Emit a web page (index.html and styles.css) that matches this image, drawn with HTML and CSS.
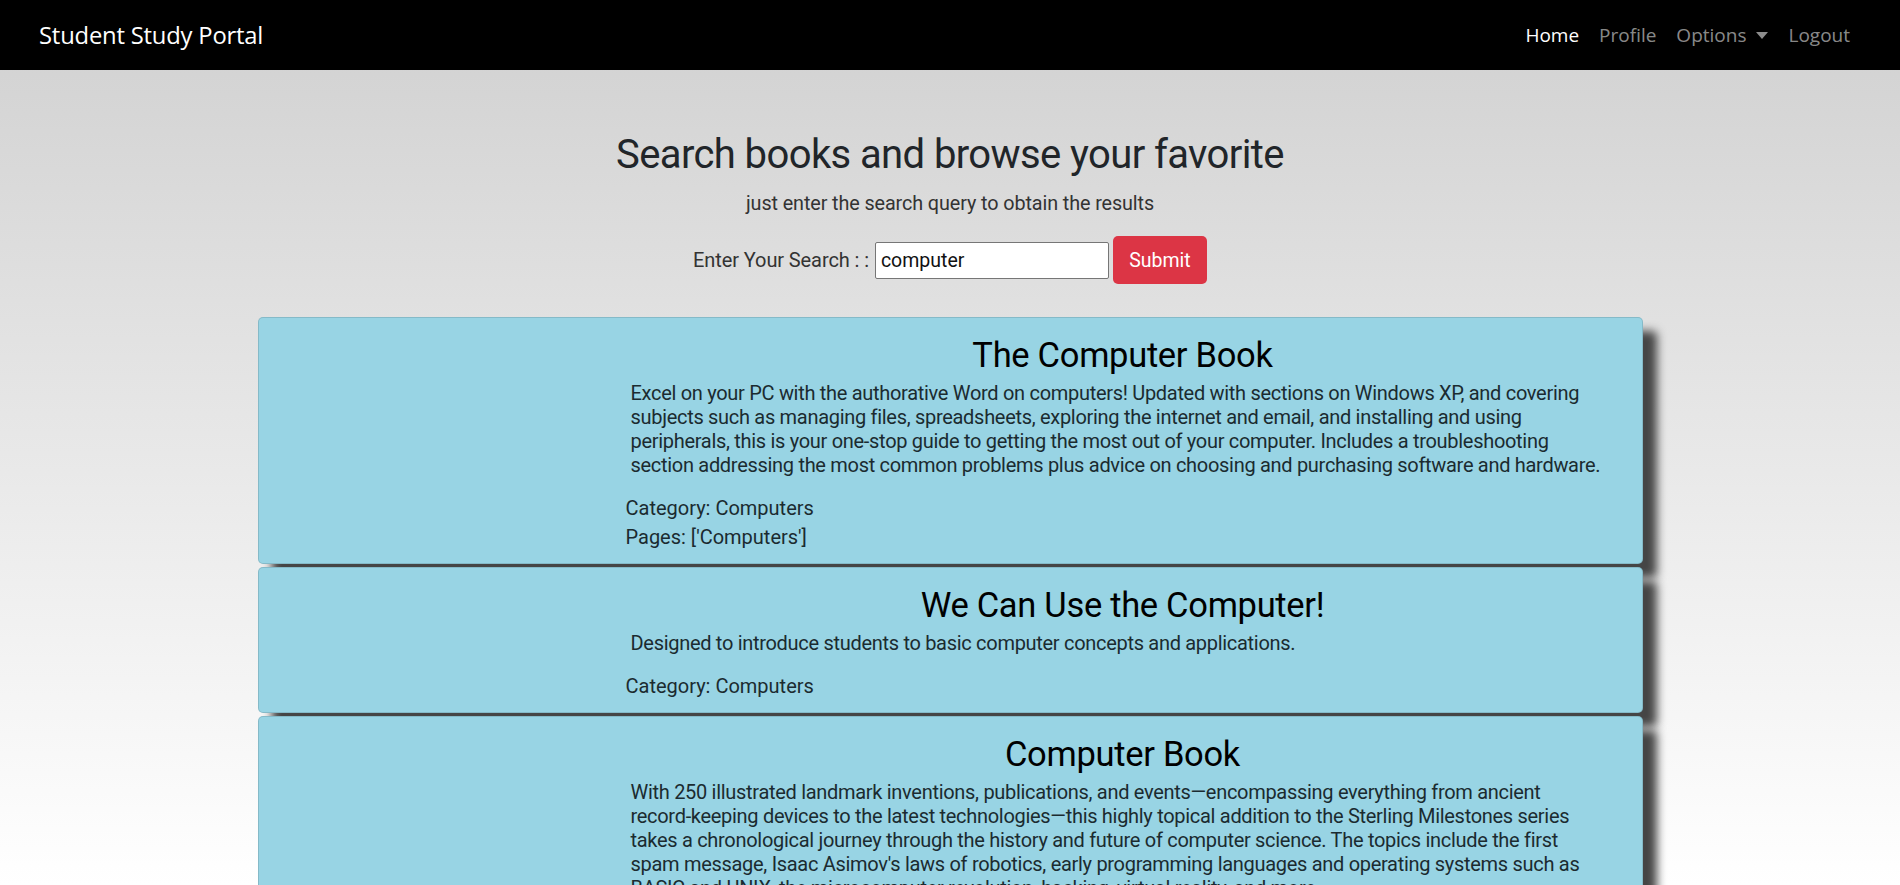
FILE: index.html
```html
<!DOCTYPE html>
<html lang="en">
<head>
<meta charset="utf-8">
<title>Student Study Portal</title>
<link rel="stylesheet" href="styles.css">
</head>
<body>
<nav class="navbar">
  <a class="brand" href="#">Student Study Portal</a>
  <ul class="nav-links">
    <li><a class="nav-link active" href="#">Home</a></li>
    <li><a class="nav-link" href="#">Profile</a></li>
    <li><a class="nav-link dropdown" href="#">Options<span class="caret"></span></a></li>
    <li><a class="nav-link" href="#">Logout</a></li>
  </ul>
</nav>

<main class="page">
  <header class="intro">
    <h1 class="title">Search books and browse your favorite</h1>
    <p class="subtitle">just enter the search query to obtain the results</p>
    <form class="search-form">
      <label class="search-label" for="q">Enter Your Search : :</label>
      <input class="search-input" id="q" type="text" value="computer">
      <button class="btn-submit" type="button">Submit</button>
    </form>
  </header>

  <section class="results">
    <article class="book-card">
      <div class="book-thumb"></div>
      <div class="book-body">
        <h2 class="book-title">The Computer Book</h2>
        <p class="book-desc">Excel on your PC with the authorative Word on computers! Updated with sections on Windows XP, and covering subjects such as managing files, spreadsheets, exploring the internet and email, and installing and using peripherals, this is your one-stop guide to getting the most out of your computer. Includes a troubleshooting section addressing the most common problems plus advice on choosing and purchasing software and hardware.</p>
        <p class="book-meta">Category: Computers</p>
        <p class="book-meta">Pages: ['Computers']</p>
      </div>
    </article>

    <article class="book-card">
      <div class="book-thumb"></div>
      <div class="book-body">
        <h2 class="book-title">We Can Use the Computer!</h2>
        <p class="book-desc">Designed to introduce students to basic computer concepts and applications.</p>
        <p class="book-meta">Category: Computers</p>
      </div>
    </article>

    <article class="book-card">
      <div class="book-thumb"></div>
      <div class="book-body">
        <h2 class="book-title">Computer Book</h2>
        <p class="book-desc">With 250 illustrated landmark inventions, publications, and events—encompassing everything from ancient record-keeping devices to the latest technologies—this highly topical addition to the Sterling Milestones series takes a chronological journey through the history and future of computer science. The topics include the first spam message, Isaac Asimov's laws of robotics, early programming languages and operating systems such as BASIC and UNIX, the microcomputer revolution, hacking, virtual reality, and more.</p>
        <p class="book-meta">Category: Computers</p>
        <p class="book-meta">Pages: ['Computers']</p>
      </div>
    </article>
  </section>
</main>
</body>
</html>
```

FILE: styles.css
```css
* { box-sizing: border-box; }

html, body {
  margin: 0;
  padding: 0;
}

body {
  font-family: Roboto, "Liberation Sans", sans-serif;
  color: #212529;
  background: linear-gradient(to bottom, #d0d0d0 0%, #ffffff 100%) fixed;
  min-height: 100vh;
}

/* ---------- navbar ---------- */
.navbar {
  height: 70px;
  background: #000;
  display: flex;
  align-items: center;
  justify-content: space-between;
  padding: 0 40px 0 39px;
  font-family: "Open Sans", "Noto Sans", sans-serif;
}

.brand {
  color: #fff;
  text-decoration: none;
  font-size: 23.8px;
  letter-spacing: -0.2px;
}

.nav-links {
  list-style: none;
  display: flex;
  margin: 0;
  padding: 0;
}

.nav-link {
  display: flex;
  align-items: center;
  padding: 0 10px;
  font-size: 19px;
  color: rgba(255, 255, 255, 0.55);
  text-decoration: none;
}

.nav-link.active { color: #fff; }

.caret {
  display: inline-block;
  margin-left: 10px;
  width: 0;
  height: 0;
  border-left: 6px solid transparent;
  border-right: 6px solid transparent;
  border-top: 7px solid rgba(255, 255, 255, 0.55);
}

/* ---------- intro ---------- */
.intro {
  text-align: center;
  padding-top: 60px;
}

.title {
  margin: 0;
  font-size: 40px;
  line-height: 50px;
  font-weight: 400;
  letter-spacing: -0.6px;
  color: #212529;
}

.subtitle {
  margin: 11px 0 0;
  font-size: 19.8px;
  line-height: 26px;
  color: #333;
  letter-spacing: -0.1px;
}

.search-form {
  display: flex;
  justify-content: center;
  align-items: center;
  margin-top: 19px;
  gap: 4px;
}

.search-label {
  font-size: 20px;
  color: #333;
  margin-right: 2px;
  letter-spacing: -0.1px;
}

.search-input {
  width: 234px;
  height: 37px;
  padding: 0 5px;
  border: 1px solid #767676;
  border-radius: 2px;
  font-family: Roboto, "Liberation Sans", sans-serif;
  font-size: 19.5px;
  color: #111;
  background: #fff;
}

.btn-submit {
  width: 94px;
  height: 48px;
  border: none;
  border-radius: 5px;
  background: #dc3545;
  color: #fff;
  font-family: Roboto, "Liberation Sans", sans-serif;
  font-size: 19.5px;
}

/* ---------- results ---------- */
.results {
  width: 1385px;
  margin: 33px auto 0;
}

.book-card {
  display: grid;
  grid-template-columns: 367px 1fr;
  background: #98d4e4;
  border: 1px solid rgba(0, 0, 0, 0.12);
  border-radius: 5px;
  box-shadow: 14px 14px 10px #454545;
  margin-bottom: 3px;
  padding: 16px 22px 11px 0;
}

.book-body { min-width: 0; }

.book-title {
  margin: 0;
  text-align: center;
  font-size: 34.5px;
  line-height: 42px;
  font-weight: 400;
  color: #000;
  letter-spacing: -0.3px;
}

.book-desc {
  margin: 5px 18px 17px 5px;
  font-size: 20px;
  line-height: 24px;
  color: #1b2b30;
  letter-spacing: -0.3px;
}

.book-meta {
  margin: 0;
  font-size: 20px;
  line-height: 29px;
  color: #1b2b30;
}
```
